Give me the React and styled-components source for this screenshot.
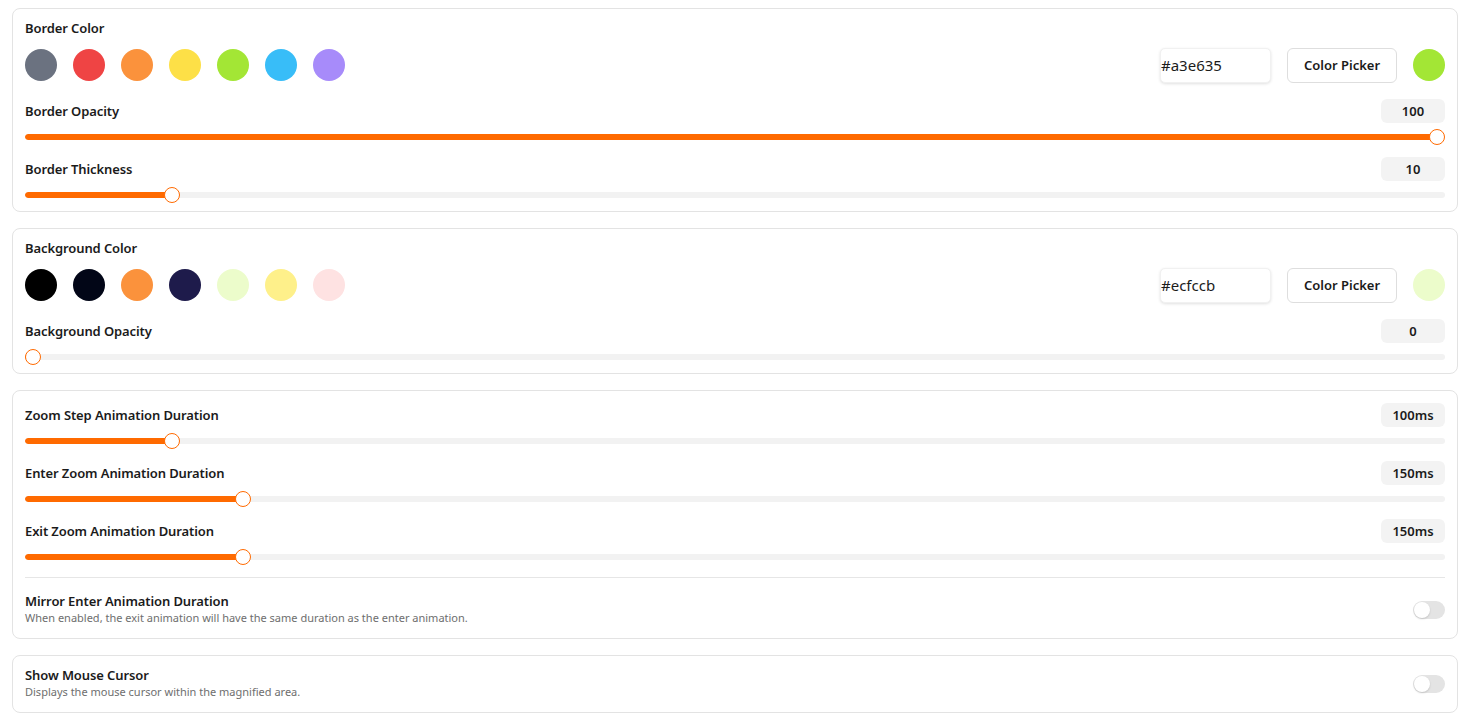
import React from "react";
import styled, { createGlobalStyle } from "styled-components";

const GlobalStyle = createGlobalStyle`
  html, body { margin: 0; padding: 0; background: #ffffff; }
  body {
    font-family: "Noto Sans", "Open Sans", sans-serif;
    color: #1b1b1b;
    -webkit-font-smoothing: antialiased;
  }
  * { box-sizing: border-box; }
`;

const ORANGE = "#ff6a00";

const Page = styled.div`
  display: flex;
  flex-direction: column;
  gap: 16px;
  padding: 8px 11px 8px 12px;
`;

const Card = styled.section`
  border: 1px solid #e3e3e3;
  border-radius: 8px;
  background: #fff;
  padding: 12px 12px ${(p) => (p.$tight ? "8px" : "13px")} 12px;
  display: flex;
  flex-direction: column;
`;

const ColorSection = styled.div`
  display: flex;
  flex-direction: column;
  gap: 13px;
  margin-bottom: 17px;
`;

const Label = styled.div`
  font-size: 13px;
  font-weight: 600;
  line-height: 14px;
  color: #1b1b1b;
  letter-spacing: -0.1px;
`;

const ColorRow = styled.div`
  display: flex;
  align-items: center;
  height: 34px;
`;

const Swatches = styled.div`
  display: flex;
  gap: 16px;
  flex: 1;
`;

const Swatch = styled.button`
  width: 32px;
  height: 32px;
  border-radius: 50%;
  border: none;
  padding: 0;
  background: ${(p) => p.$color};
  cursor: pointer;
`;

const HexInput = styled.input`
  width: 111px;
  height: 35px;
  border: 1px solid #f1f1f1;
  border-radius: 5px;
  padding: 0;
  font-family: "Noto Sans", "Open Sans", sans-serif;
  font-size: 15px;
  color: #1b1b1b;
  background: #fff;
  box-shadow: 0 1px 3px rgba(0, 0, 0, 0.12);
  outline: none;
`;

const PickerButton = styled.button`
  margin-left: 16px;
  width: 110px;
  height: 35px;
  border: 1px solid #dedede;
  border-radius: 6px;
  background: #fff;
  font-family: "Noto Sans", "Open Sans", sans-serif;
  font-size: 13px;
  font-weight: 600;
  color: #1b1b1b;
  cursor: pointer;
`;

const Preview = styled.div`
  margin-left: 16px;
  width: 32px;
  height: 32px;
  border-radius: 50%;
  background: ${(p) => p.$color};
`;

const SliderGroup = styled.div`
  display: flex;
  flex-direction: column;
  gap: 6px;
  & + & {
    margin-top: 12px;
  }
`;

const SliderHeader = styled.div`
  display: flex;
  align-items: center;
  justify-content: space-between;
  height: 24px;
`;

const ValueBadge = styled.div`
  min-width: 64px;
  height: 24px;
  padding: 0 10px;
  border-radius: 6px;
  background: #f3f3f3;
  font-size: 13px;
  font-weight: 600;
  display: flex;
  align-items: center;
  justify-content: center;
`;

const SliderRoot = styled.div`
  position: relative;
  height: 16px;
  display: flex;
  align-items: center;
`;

const Track = styled.div`
  position: relative;
  width: 100%;
  height: 6px;
  border-radius: 3px;
  background: #f2f2f2;
  overflow: hidden;
`;

const Fill = styled.div`
  height: 100%;
  background: ${ORANGE};
  border-radius: 3px;
`;

const Thumb = styled.div`
  position: absolute;
  top: 0;
  width: 16px;
  height: 16px;
  margin-left: -8px;
  border-radius: 50%;
  background: #fff;
  border: 1.5px solid ${ORANGE};
`;

const Divider = styled.hr`
  border: none;
  border-top: 1px solid #e6e6e6;
  margin: 12px 0 0;
`;

const ToggleRow = styled.div`
  display: flex;
  align-items: center;
  justify-content: space-between;
  padding-top: ${(p) => p.$offset || 0}px;
`;

const ToggleText = styled.div`
  display: flex;
  flex-direction: column;
  gap: 3px;
`;

const Description = styled.div`
  font-size: 11px;
  line-height: 14px;
  color: #6e6e6e;
`;

const Toggle = styled.div`
  position: relative;
  width: 32px;
  height: 18px;
  border-radius: 9px;
  background: #e4e4e4;
`;

const ToggleKnob = styled.div`
  position: absolute;
  top: 1px;
  left: 1px;
  width: 16px;
  height: 16px;
  border-radius: 50%;
  background: #fff;
  box-shadow: 0 1px 2px rgba(0, 0, 0, 0.15);
`;

function Slider({ label, value, fraction }) {
  // Thumb stays inside the track: its centre travels from 8px to width - 8px.
  const left = `calc(8px + (100% - 16px) * ${fraction})`;
  return (
    <SliderGroup>
      <SliderHeader>
        <Label>{label}</Label>
        <ValueBadge>{value}</ValueBadge>
      </SliderHeader>
      <SliderRoot>
        <Track>
          <Fill style={{ width: left }} />
        </Track>
        <Thumb style={{ left }} />
      </SliderRoot>
    </SliderGroup>
  );
}

function ColorChooser({ label, colors, hex }) {
  return (
    <ColorSection>
      <Label>{label}</Label>
      <ColorRow>
        <Swatches>
          {colors.map((c) => (
            <Swatch key={c} $color={c} aria-label={c} />
          ))}
        </Swatches>
        <HexInput defaultValue={hex} />
        <PickerButton>Color Picker</PickerButton>
        <Preview $color={hex} />
      </ColorRow>
    </ColorSection>
  );
}

function Switch() {
  return (
    <Toggle>
      <ToggleKnob />
    </Toggle>
  );
}

const borderColors = ["#6b7280", "#ef4444", "#fb923c", "#fde047", "#a3e635", "#38bdf8", "#a78bfa"];
const backgroundColors = ["#000000", "#020617", "#fb923c", "#1e1b4b", "#ecfccb", "#fef08a", "#fee2e2"];

export default function App() {
  return (
    <>
      <GlobalStyle />
      <Page>
        <Card $tight>
          <ColorChooser label="Border Color" colors={borderColors} hex="#a3e635" />
          <Slider label="Border Opacity" value="100" fraction={1} />
          <Slider label="Border Thickness" value="10" fraction={0.099} />
        </Card>

        <Card $tight>
          <ColorChooser label="Background Color" colors={backgroundColors} hex="#ecfccb" />
          <Slider label="Background Opacity" value="0" fraction={0} />
        </Card>

        <Card>
          <Slider label="Zoom Step Animation Duration" value="100ms" fraction={0.099} />
          <Slider label="Enter Zoom Animation Duration" value="150ms" fraction={0.1496} />
          <Slider label="Exit Zoom Animation Duration" value="150ms" fraction={0.1496} />
          <Divider />
          <ToggleRow $offset={16}>
            <ToggleText>
              <Label>Mirror Enter Animation Duration</Label>
              <Description>When enabled, the exit animation will have the same duration as the enter animation.</Description>
            </ToggleText>
            <Switch />
          </ToggleRow>
        </Card>

        <Card>
          <ToggleRow>
            <ToggleText>
              <Label>Show Mouse Cursor</Label>
              <Description>Displays the mouse cursor within the magnified area.</Description>
            </ToggleText>
            <Switch />
          </ToggleRow>
        </Card>
      </Page>
    </>
  );
}
